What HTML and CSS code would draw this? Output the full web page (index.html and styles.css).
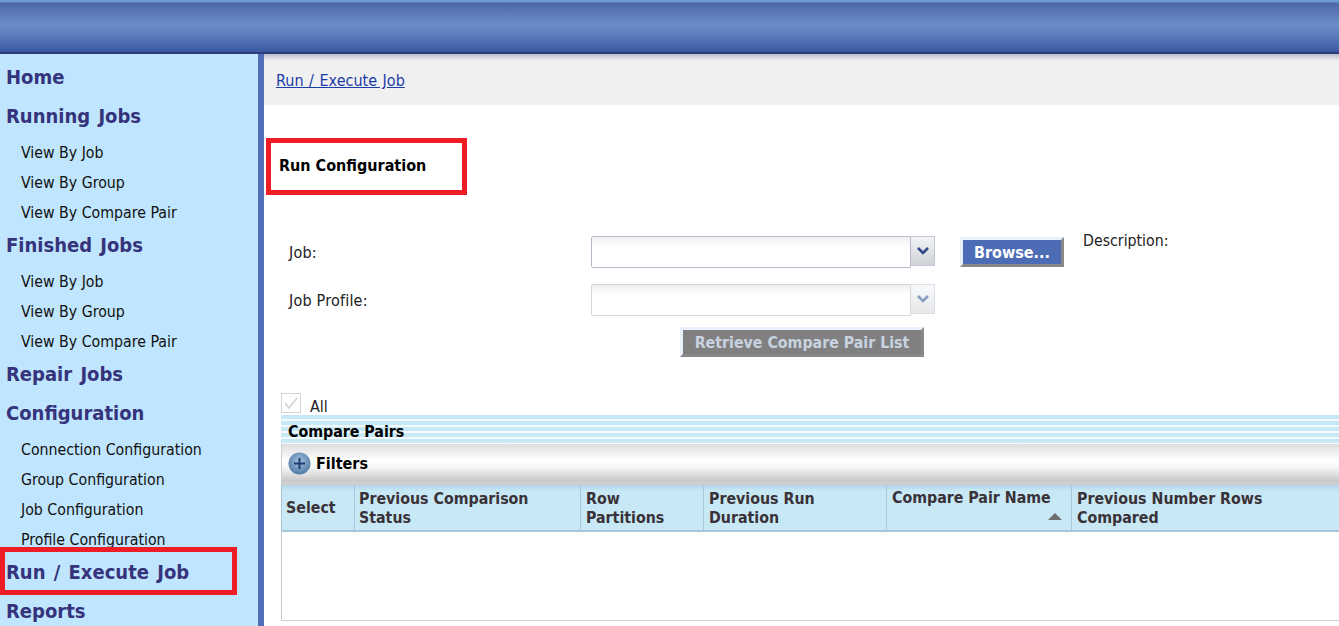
FILE: index.html
```html
<!DOCTYPE html>
<html lang="en">
  <head>
    <meta charset="UTF-8" />
    <title>Run / Execute Job</title>
    <link rel="stylesheet" href="styles.css">
  </head>
  <body>
    <header class="banner"></header>
    <div class="layout">
      <nav class="sidebar">
        <a class="nav-head">Home</a>
        <a class="nav-head">Running Jobs</a>
        <a class="nav-sub">View By Job</a>
        <a class="nav-sub">View By Group</a>
        <a class="nav-sub">View By Compare Pair</a>
        <a class="nav-head">Finished Jobs</a>
        <a class="nav-sub">View By Job</a>
        <a class="nav-sub">View By Group</a>
        <a class="nav-sub">View By Compare Pair</a>
        <a class="nav-head">Repair Jobs</a>
        <a class="nav-head">Configuration</a>
        <a class="nav-sub">Connection Configuration</a>
        <a class="nav-sub">Group Configuration</a>
        <a class="nav-sub">Job Configuration</a>
        <a class="nav-sub">Profile Configuration</a>
        <a class="nav-head marked">Run / Execute Job</a>
        <a class="nav-head">Reports</a>
      </nav>
      <main class="content">
        <div class="crumbs"><a href="#">Run / Execute Job</a></div>
        <h1 class="title">Run Configuration</h1>
        <div class="form">
          <div class="row row-job">
            <label class="field-label">Job:</label>
            <div class="combo">
              <div class="combo-input"></div>
              <div class="combo-arrow">
                <svg width="12" height="8" viewBox="0 0 12 8"><path d="M1 1 L6 6 L11 1" fill="none" stroke="#2f4a86" stroke-width="2.6"/></svg>
              </div>
            </div>
            <button class="btn browse" type="button">Browse...</button>
            <span class="desc">Description:</span>
          </div>
          <div class="row row-profile">
            <label class="field-label">Job Profile:</label>
            <div class="combo disabled">
              <div class="combo-input"></div>
              <div class="combo-arrow">
                <svg width="12" height="8" viewBox="0 0 12 8"><path d="M1 1 L6 6 L11 1" fill="none" stroke="#8b9cc0" stroke-width="2.6"/></svg>
              </div>
            </div>
          </div>
          <div class="row-retrieve">
            <button class="btn retrieve" type="button">Retrieve Compare Pair List</button>
          </div>
        </div>
        <div class="all-row">
          <span class="check">
            <svg width="18" height="18" viewBox="0 0 18 18"><path d="M3 9 L7 14 L15 4" fill="none" stroke="#d2d2d2" stroke-width="1.6"/></svg>
          </span>
          <span class="all-label">All</span>
        </div>
        <div class="panel">
          <div class="panel-title">Compare Pairs</div>
          <div class="filters">
            <svg width="23" height="23" viewBox="0 0 23 23">
              <defs>
                <radialGradient id="ball" cx="50%" cy="40%" r="60%">
                  <stop offset="0" stop-color="#a9c3dd"/>
                  <stop offset="1" stop-color="#4f7aa6"/>
                </radialGradient>
              </defs>
              <circle cx="11.5" cy="11.5" r="11" fill="url(#ball)"/>
              <path d="M11.5 6 V17 M6 11.5 H17" stroke="#1f3f74" stroke-width="2"/>
            </svg>
            <span>Filters</span>
          </div>
          <div class="grid-head">
            <div class="col col-select">Select</div>
            <div class="col col-status">Previous Comparison Status</div>
            <div class="col col-parts">Row Partitions</div>
            <div class="col col-duration">Previous Run Duration</div>
            <div class="col col-name">
              Compare Pair Name
              <span class="sort-up"></span>
            </div>
            <div class="col col-rows">Previous Number Rows Compared</div>
          </div>
          <div class="grid-body"></div>
        </div>
      </main>
    </div>
  </body>
</html>
```

FILE: styles.css
```css
html,
body {
  margin: 0;
  height: 626px;
  overflow: hidden;
}
body {
  font-family: "DejaVu Sans Condensed", "DejaVu Sans", sans-serif;
  font-stretch: condensed;
  font-size: 15px;
  color: #222;
  background: #fff;
}
.banner {
  height: 52px;
  border-bottom: 2px solid #2e3c7c;
  background: linear-gradient(
    #6d9ad0 0,
    #6d9ad0 2px,
    #4e66a8 3px,
    #6b8dc7 24px,
    #5a7cbc 36px,
    #3a58a2 52px
  );
}
.layout {
  display: flex;
  height: 572px;
}
.sidebar {
  width: 258px;
  flex: none;
  box-sizing: border-box;
  padding-top: 5px;
  background: #c0e5fe;
}
.nav-head {
  display: block;
  position: relative;
  height: 36px;
  line-height: 36px;
  margin-bottom: 3px;
  padding-left: 6px;
  font-size: 20px;
  font-weight: bold;
  word-spacing: 2px;
  color: #35337b;
}
.nav-sub {
  display: block;
  height: 30px;
  line-height: 32px;
  padding-left: 21px;
  font-size: 15.75px;
  color: #111;
}
.marked::after {
  content: "";
  position: absolute;
  left: 0;
  top: -7px;
  width: 227px;
  height: 38px;
  border: 5px solid #ee1c25;
}
.content {
  flex: 1;
  min-width: 0;
  border-left: 6px solid #4f6eb6;
  overflow: hidden;
}
.crumbs {
  height: 51px;
  line-height: 53px;
  padding-left: 12px;
  font-size: 16px;
  word-spacing: 1px;
  background: linear-gradient(#b9bfcb 0, #f0f0f0 7px);
}
.crumbs a {
  color: #1c3ca8;
}
.title {
  box-sizing: border-box;
  width: 201px;
  height: 57px;
  margin: 33px 0 0 2px;
  padding-left: 8px;
  border: 5px solid #ee1c25;
  font-size: 16px;
  line-height: 46px;
  color: #000;
}
.form {
  margin-top: 41px;
}
.row {
  display: flex;
  align-items: flex-start;
}
.row-job {
  height: 48px;
}
.row-profile {
  height: 43px;
}
.field-label {
  width: 327px;
  flex: none;
  padding-left: 25px;
  box-sizing: border-box;
  font-size: 16px;
  line-height: 34px;
  letter-spacing: 0.2px;
}
.combo {
  display: flex;
  width: 344px;
  height: 32px;
  flex: none;
}
.combo-input {
  flex: 1;
  border: 1px solid #b9b9cc;
  border-radius: 2px 0 0 2px;
  background: linear-gradient(#eef0f0 0, #fff 10px);
}
.combo-arrow {
  width: 24px;
  height: 30px;
  display: flex;
  align-items: center;
  justify-content: center;
  box-sizing: border-box;
  border: 1px solid #c4c8d8;
  border-left: 0;
  background: linear-gradient(#f2f3f5, #cfd2d6);
}
.disabled .combo-input {
  border-color: #d6d6e2;
}
.disabled .combo-arrow {
  border-color: #dcdee8;
  background: linear-gradient(#f8f9fa, #e6e8ea);
}
.btn {
  box-sizing: border-box;
  font-family: inherit;
  font-stretch: condensed;
  font-size: 16px;
  font-weight: bold;
  padding: 0;
  border-style: solid;
  border-width: 3px;
  border-color: #e9f0fb #888 #888 #e9f0fb;
}
.browse {
  width: 104px;
  height: 30px;
  margin: 1px 0 0 25px;
  color: #fff;
  background: #4d6cb6;
}
.desc {
  margin: -5px 0 0 19px;
  font-size: 15.75px;
  line-height: 20px;
  color: #222;
}
.row-retrieve {
  padding-left: 416px;
}
.retrieve {
  width: 244px;
  height: 30px;
  font-size: 15.8px;
  color: #c9d3e0;
  background: #808080;
}
.all-row {
  display: flex;
  align-items: flex-end;
  margin: 35px 0 0 17px;
  height: 22px;
}
.check {
  box-sizing: border-box;
  width: 20px;
  height: 20px;
  margin-bottom: 1px;
  border: 1px solid #d4d4d4;
  display: flex;
}
.all-label {
  margin-left: 9px;
  font-size: 16px;
  line-height: 20px;
  position: relative;
  top: 3px;
}
.panel {
  margin: 1px 0 0 17px;
}
.panel-title {
  height: 29px;
  line-height: 34px;
  padding-left: 7px;
  font-size: 15.8px;
  font-weight: bold;
  color: #000;
  background: repeating-linear-gradient(#c7e9f5 0, #c7e9f5 4px, #f2fafd 4px, #f2fafd 6px);
}
.filters {
  display: flex;
  align-items: center;
  gap: 5px;
  height: 41px;
  box-sizing: border-box;
  padding: 0 0 3px 6px;
  border-left: 1px solid #c4d4cc;
  font-size: 16px;
  font-weight: bold;
  color: #000;
  background: linear-gradient(#dedede 0, #fff 17px, #f4f4f4 24px, #c8c8c8 37px, #cfcfcf 38px);
}
.grid-head {
  display: flex;
  height: 47px;
  box-sizing: border-box;
  border-left: 1px solid #a8c6de;
  border-bottom: 2px solid #a5c5dc;
  background: linear-gradient(#b3d5ea 0, #c7e8f4 6px);
}
.col {
  box-sizing: border-box;
  flex: none;
  display: flex;
  align-items: center;
  padding: 0 4px 0 5px;
  border-right: 1px solid #a8c6de;
  font-size: 15.8px;
  font-weight: bold;
  line-height: 19px;
  color: #3a3238;
}
.col-select { width: 73px; padding-left: 4px; }
.col-status { width: 226px; padding-left: 4px; }
.col-parts { width: 123px; padding-left: 5px; }
.col-duration { width: 183px; }
.col-name {
  width: 185px;
  display: block;
  padding-top: 3px;
  position: relative;
}
.col-rows { flex: 1; min-width: 0; border-right: 0; padding-right: 40px; }
.sort-up {
  position: absolute;
  right: 9px;
  top: 28px;
  border-left: 7px solid transparent;
  border-right: 7px solid transparent;
  border-bottom: 7px solid #6e6e6e;
}
.grid-body {
  height: 88px;
  border-left: 1px solid #c8c8c8;
  border-bottom: 1px solid #cfcfcf;
  background: #fff;
}
```
